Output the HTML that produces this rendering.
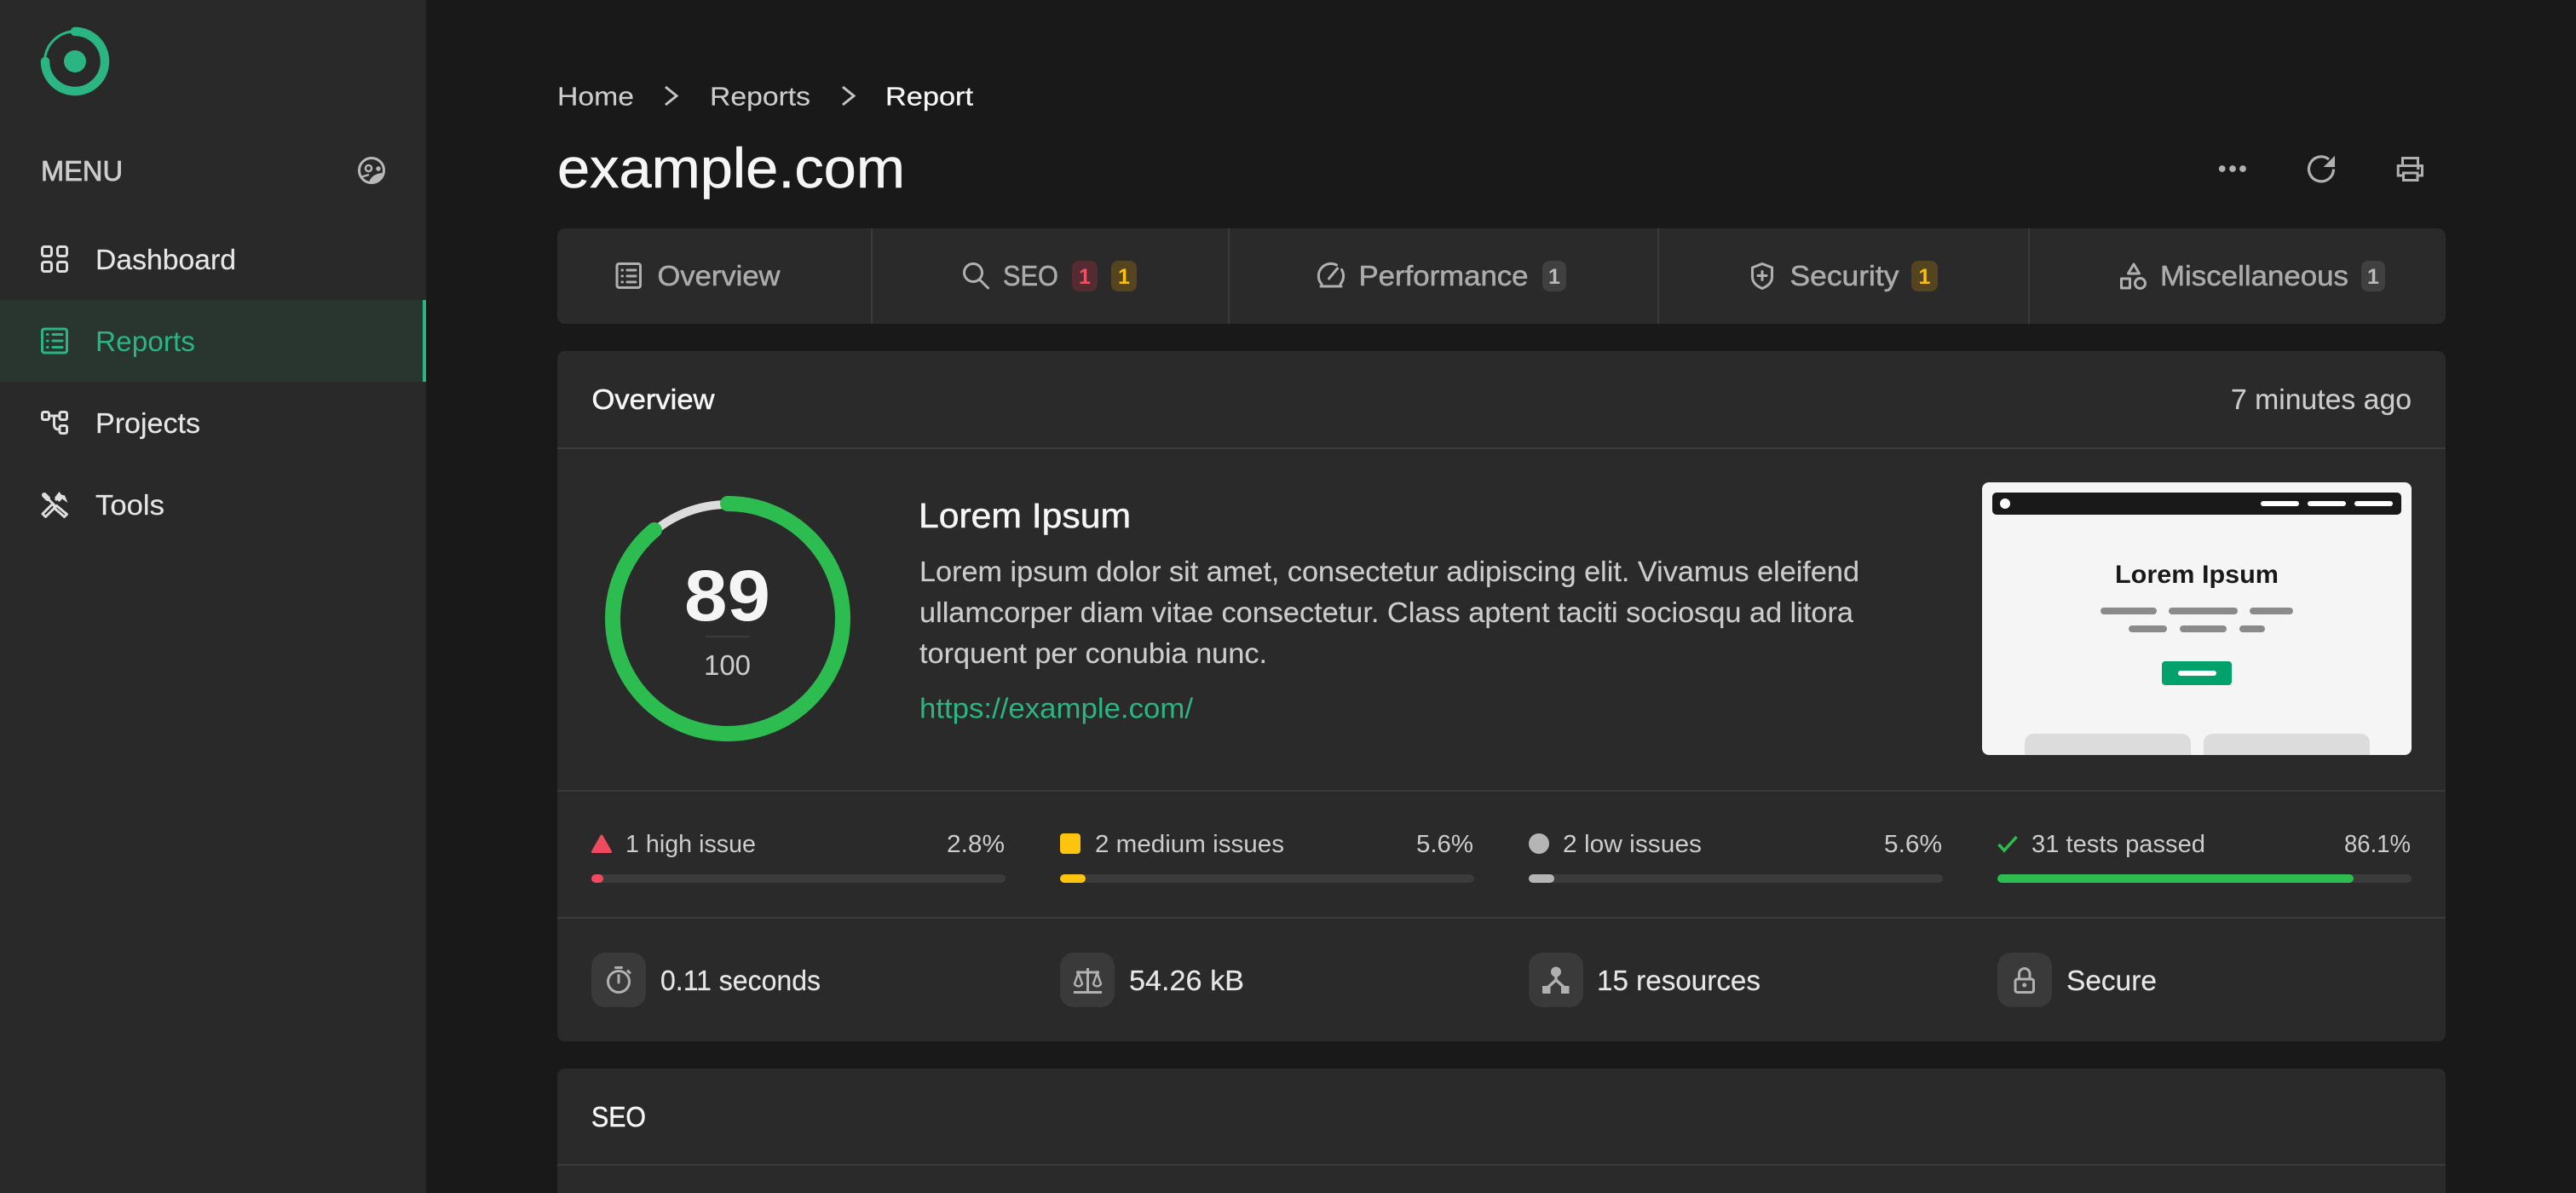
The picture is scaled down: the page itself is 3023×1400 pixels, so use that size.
<!DOCTYPE html>
<html lang="en">
<head>
<meta charset="utf-8">
<title>example.com - Report</title>
<style>
html,body{margin:0;padding:0;background:#191919;width:3023px;height:1400px;overflow:hidden}
svg{display:block}
text{font-family:"Liberation Sans",Arial,sans-serif;font-size:33px;white-space:pre}
.m{stroke-width:.55px;paint-order:stroke}
.ic{fill:none;stroke-width:3;stroke-linecap:round;stroke-linejoin:round}
.g1{fill:#e6e6e6;stroke:#e6e6e6}
.g2{fill:#cccccc;stroke:#cccccc}
.g3{fill:#ababab;stroke:#ababab}
.w{fill:#f5f5f5;stroke:#f5f5f5}
.s{font-size:29px;fill:#cccccc}
.i2{stroke:#b0b0b0}
.i1{stroke:#dedede}
</style>
</head>
<body>
<svg xmlns="http://www.w3.org/2000/svg" width="3023" height="1400" viewBox="0 0 3023 1400">
<rect width="3023" height="1400" fill="#191919"/>

<!-- Sidebar -->
<rect width="500" height="1400" fill="#292929"/>
<g fill="none" stroke="#2bb583" stroke-linecap="round">
  <path d="M88 37A35 35 0 1 1 53 72" stroke-width="10.5"/>
  <path d="M53 66A36 36 0 0 1 84 37" stroke-width="3"/>
</g>
<circle cx="88" cy="72" r="13" fill="#2bb583"/>

<text x="48" y="212" class="g2" stroke-width=".8" paint-order="stroke" textLength="96" lengthAdjust="spacingAndGlyphs">MENU</text>
<circle cx="436" cy="200" r="14.5" fill="none" stroke="#b8b8b8" stroke-width="3"/>
<circle cx="432.5" cy="197.5" r="3.6" fill="none" stroke="#b8b8b8" stroke-width="2.4"/>
<circle cx="444" cy="198" r="2.7" fill="#b8b8b8"/>
<path d="M433 214C435 207 441 203 451 203C450 209 445 214 438 215Z" fill="#b8b8b8"/>
<path d="M423 208L433 205" fill="none" stroke="#b8b8b8" stroke-width="2.4"/>

<g class="ic i1">
  <rect x="49.5" y="289.5" width="11" height="11" rx="2.5"/>
  <rect x="67.5" y="289.5" width="11" height="11" rx="2.5"/>
  <rect x="49.5" y="307.5" width="11" height="11" rx="2.5"/>
  <rect x="67.5" y="307.5" width="11" height="11" rx="2.5"/>
</g>
<text x="112" y="316" class="g1" stroke-width=".2" textLength="165" lengthAdjust="spacingAndGlyphs">Dashboard</text>

<rect y="352" width="500" height="96" fill="#29352f"/>
<rect x="496" y="352" width="4" height="96" fill="#2bb583"/>
<g class="ic" stroke="#2bb583">
  <rect x="49.5" y="386" width="29" height="28" rx="2.5"/>
  <path d="M62 392.5H73M62 400H73M62 407.5H73"/>
  <path d="M55.5 392.5H56M55.5 400H56M55.5 407.5H56"/>
</g>
<text x="112" y="412" fill="#2bb583" textLength="117" lengthAdjust="spacingAndGlyphs">Reports</text>

<g class="ic i1">
  <rect x="49.5" y="483.5" width="8" height="9" rx="2"/>
  <rect x="70" y="483.5" width="8.5" height="9" rx="2"/>
  <rect x="70" y="499.5" width="8.5" height="9" rx="2"/>
  <path d="M57.5 488H70M63.5 488V498Q63.5 504 69 504H70"/>
</g>
<text x="112" y="508" class="g1" stroke-width=".2" textLength="123" lengthAdjust="spacingAndGlyphs">Projects</text>

<g fill="none" stroke="#dedede" stroke-linejoin="round">
  <path d="M52 581L56 585" stroke-width="6" stroke-linecap="round"/>
  <path d="M56 585L66 595" stroke-width="3"/>
  <path d="M66.5 593.5L78.5 603.5L75.5 606.5L63.5 596Z" stroke-width="3"/>
  <path d="M50 603L61.5 591.5L65 595L53.5 606.5Z" stroke-width="3"/>
  <path d="M65 587L70 582" stroke-width="3"/>
</g>
<path d="M64 584L69.5 577L72 580.5L76 581.5L79.5 590L73 585.5L69.5 589Z" fill="#dedede"/>
<text x="112" y="604" class="g1" stroke-width=".2" textLength="81" lengthAdjust="spacingAndGlyphs">Tools</text>

<!-- Breadcrumb & title -->
<text x="654" y="123.5" class="g2" stroke-width=".15" style="font-size:31px" textLength="90" lengthAdjust="spacingAndGlyphs">Home</text>
<path d="M781 102L794 112.500L781 123" fill="none" stroke="#c4c4c4" stroke-width="3"/>
<text x="833" y="123.5" class="g2" stroke-width=".15" style="font-size:31px" textLength="118" lengthAdjust="spacingAndGlyphs">Reports</text>
<path d="M989 102L1002 112.500L989 123" fill="none" stroke="#c4c4c4" stroke-width="3"/>
<text x="1039" y="123.5" class="w" stroke-width=".3" style="font-size:31px" textLength="103" lengthAdjust="spacingAndGlyphs">Report</text>
<text x="654" y="220" class="m w" style="font-size:66px" textLength="408" lengthAdjust="spacingAndGlyphs">example.com</text>

<!-- Header actions -->
<g fill="#b0b0b0"><circle cx="2607.700" cy="198" r="3.900"/><circle cx="2620" cy="198" r="3.900"/><circle cx="2632" cy="198" r="3.900"/></g>
<path d="M2733 187A14.500 14.500 0 1 0 2738.500 198.500" fill="none" stroke="#b0b0b0" stroke-width="3.200"/>
<path d="M2740 182.700V196H2726.700Z" fill="#b0b0b0"/>
<g fill="none" stroke="#b0b0b0" stroke-width="3">
  <path d="M2819.500 193V185.500H2837.500V193"/>
  <path d="M2819 206H2814.200V194.500H2842.500V206H2838"/>
  <rect x="2820.500" y="203" width="16.500" height="8.500"/>
</g>
<circle cx="2837.700" cy="197.500" r="1.800" fill="#b0b0b0"/>

<!-- Tabs -->
<rect x="654" y="268" width="2216" height="112" rx="9" fill="#2a2a2a"/>
<g fill="#3a3a3a"><rect x="1022" y="268" width="2" height="112"/><rect x="1441" y="268" width="2" height="112"/><rect x="1945" y="268" width="2" height="112"/><rect x="2380" y="268" width="2" height="112"/></g>

<g class="ic i2">
  <rect x="724" y="309.500" width="27.500" height="28" rx="2.500"/>
  <path d="M736 317H746M736 324H746M736 331H746M730 317H730.500M730 324H730.500M730 331H730.500"/>
</g>
<text x="771.500" y="335" class="m g3" textLength="144" lengthAdjust="spacingAndGlyphs">Overview</text>

<g class="ic i2"><circle cx="1142" cy="320" r="10.500"/><path d="M1150 328.500L1159.500 338"/></g>
<text x="1177" y="335" class="m g3" textLength="65" lengthAdjust="spacingAndGlyphs">SEO</text>
<rect x="1258" y="306" width="30" height="36" rx="8" fill="#532b30"/>
<text x="1273" y="333" text-anchor="middle" fill="#ef5062" font-weight="700" style="font-size:25px">1</text>
<rect x="1304" y="306" width="30" height="36" rx="8" fill="#54441f"/>
<text x="1319" y="333" text-anchor="middle" fill="#fcc012" font-weight="700" style="font-size:25px">1</text>

<g class="ic i2">
  <path d="M1551 333.500A14.500 14.500 0 0 1 1568.500 311M1574.500 316.500A14.500 14.500 0 0 1 1573 333.500M1550 336H1574"/>
  <path d="M1559.500 327L1569.500 315"/>
</g>
<text x="1594.500" y="335" class="m g3" textLength="199" lengthAdjust="spacingAndGlyphs">Performance</text>
<rect x="1810" y="306" width="28" height="36" rx="8" fill="#404040"/>
<text x="1824" y="333" text-anchor="middle" fill="#bbbbbb" font-weight="700" style="font-size:25px">1</text>

<g class="ic i2">
  <path d="M2068 309.500L2079.500 314V325C2079.500 332 2074 336 2068 338.500C2062 336 2056.500 332 2056.500 325V314Z"/>
  <path d="M2068 318.500V328.500M2063 323.500H2073"/>
</g>
<text x="2100.500" y="335" class="m g3" textLength="128" lengthAdjust="spacingAndGlyphs">Security</text>
<rect x="2243" y="306" width="31" height="36" rx="8" fill="#54441f"/>
<text x="2258.500" y="333" text-anchor="middle" fill="#fcc012" font-weight="700" style="font-size:25px">1</text>

<g class="ic i2">
  <path d="M2504 310L2510.500 321H2497.500Z"/>
  <rect x="2489.500" y="327" width="10" height="11"/>
  <circle cx="2511.500" cy="332.500" r="6"/>
</g>
<text x="2535" y="335" class="m g3" textLength="221" lengthAdjust="spacingAndGlyphs">Miscellaneous</text>
<rect x="2771" y="306" width="28" height="36" rx="8" fill="#404040"/>
<text x="2785" y="333" text-anchor="middle" fill="#bbbbbb" font-weight="700" style="font-size:25px">1</text>

<!-- Overview card -->
<rect x="654" y="412" width="2216" height="810" rx="9" fill="#2a2a2a"/>
<text x="694.500" y="480" class="m w" textLength="144" lengthAdjust="spacingAndGlyphs">Overview</text>
<text x="2618" y="480" class="g2" stroke-width=".15" textLength="212" lengthAdjust="spacingAndGlyphs">7 minutes ago</text>
<rect x="654" y="525" width="2216" height="2" fill="#3a3a3a"/>

<circle cx="854" cy="726" r="134" fill="none" stroke="#dcdcdc" stroke-width="10"/>
<circle cx="854" cy="726" r="135" fill="none" stroke="#2dbc50" stroke-width="18" stroke-linecap="round" pathLength="100" stroke-dasharray="89 100" transform="rotate(-90 854 726)"/>
<text x="803" y="728" fill="#f5f5f5" font-weight="700" style="font-size:84px" textLength="101" lengthAdjust="spacingAndGlyphs">89</text>
<rect x="828" y="746" width="52" height="2" fill="#3a3a3a"/>
<text x="826" y="792" fill="#cccccc" textLength="55" lengthAdjust="spacingAndGlyphs">100</text>

<text x="1078" y="619" class="m w" style="font-size:41px" textLength="249" lengthAdjust="spacingAndGlyphs">Lorem Ipsum</text>
<text x="1079" y="682" class="g2" stroke-width=".15" textLength="1103" lengthAdjust="spacingAndGlyphs">Lorem ipsum dolor sit amet, consectetur adipiscing elit. Vivamus eleifend</text>
<text x="1079" y="730" class="g2" stroke-width=".15" textLength="1096" lengthAdjust="spacingAndGlyphs">ullamcorper diam vitae consectetur. Class aptent taciti sociosqu ad litora</text>
<text x="1079" y="778" class="g2" stroke-width=".15" textLength="408" lengthAdjust="spacingAndGlyphs">torquent per conubia nunc.</text>
<text x="1079" y="842.500" fill="#2bb583" textLength="321" lengthAdjust="spacingAndGlyphs">https://example.com/</text>

<!-- Preview thumbnail -->
<rect x="2326" y="566" width="504" height="320" rx="8" fill="#f5f5f5"/>
<rect x="2338" y="578" width="480" height="26" rx="5" fill="#191919"/>
<circle cx="2353" cy="591" r="6" fill="#fff"/>
<g fill="#fff"><rect x="2653" y="588" width="45" height="6" rx="3"/><rect x="2708" y="588" width="45" height="6" rx="3"/><rect x="2763" y="588" width="45" height="6" rx="3"/></g>
<text x="2482" y="684" fill="#191919" font-weight="700" style="font-size:30px" textLength="192" lengthAdjust="spacingAndGlyphs">Lorem Ipsum</text>
<g fill="#8a8a8a">
  <rect x="2465" y="713" width="66" height="8" rx="4"/><rect x="2545" y="713" width="81" height="8" rx="4"/><rect x="2640" y="713" width="51" height="8" rx="4"/>
  <rect x="2498" y="734" width="45" height="8" rx="4"/><rect x="2558" y="734" width="55" height="8" rx="4"/><rect x="2628" y="734" width="30" height="8" rx="4"/>
</g>
<rect x="2537" y="776" width="82" height="28" rx="4" fill="#00a16b"/>
<rect x="2556" y="787" width="45" height="6" rx="3" fill="#fff"/>
<path d="M2376 886V873Q2376 861 2388 861H2559Q2571 861 2571 873V886Z" fill="#dcdcdc"/>
<path d="M2586 886V873Q2586 861 2598 861H2769Q2781 861 2781 873V886Z" fill="#dcdcdc"/>

<rect x="654" y="927" width="2216" height="2" fill="#3a3a3a"/>

<!-- Issue stats -->
<path d="M706 981L716.500 999.500H695.500Z" fill="#f04a5e" stroke="#f04a5e" stroke-width="3" stroke-linejoin="round"/>
<text x="734" y="1000" class="s" textLength="153" lengthAdjust="spacingAndGlyphs">1 high issue</text>
<text x="1111" y="1000" class="s" textLength="68" lengthAdjust="spacingAndGlyphs">2.8%</text>
<rect x="694" y="1026" width="486" height="10" rx="5" fill="#3b3b3b"/>
<rect x="694" y="1026" width="14" height="10" rx="5" fill="#f04a5e"/>

<rect x="1244" y="978" width="24" height="24" rx="4" fill="#fdc40f"/>
<text x="1285" y="1000" class="s" textLength="222" lengthAdjust="spacingAndGlyphs">2 medium issues</text>
<text x="1662" y="1000" class="s" textLength="67" lengthAdjust="spacingAndGlyphs">5.6%</text>
<rect x="1244" y="1026" width="486" height="10" rx="5" fill="#3b3b3b"/>
<rect x="1244" y="1026" width="30" height="10" rx="5" fill="#fdc40f"/>

<circle cx="1806" cy="990" r="12" fill="#b5b5b5"/>
<text x="1834" y="1000" class="s" textLength="163" lengthAdjust="spacingAndGlyphs">2 low issues</text>
<text x="2211" y="1000" class="s" textLength="68" lengthAdjust="spacingAndGlyphs">5.6%</text>
<rect x="1794" y="1026" width="486" height="10" rx="5" fill="#3b3b3b"/>
<rect x="1794" y="1026" width="30" height="10" rx="5" fill="#b5b5b5"/>

<path d="M2345.500 991L2352 998L2366.500 982" fill="none" stroke="#2dbc50" stroke-width="3.500"/>
<text x="2384" y="1000" class="s" textLength="204" lengthAdjust="spacingAndGlyphs">31 tests passed</text>
<text x="2751" y="1000" class="s" textLength="78" lengthAdjust="spacingAndGlyphs">86.1%</text>
<rect x="2344" y="1026" width="486" height="10" rx="5" fill="#3b3b3b"/>
<rect x="2344" y="1026" width="418" height="10" rx="5" fill="#2dbc50"/>

<rect x="654" y="1076" width="2216" height="2" fill="#3a3a3a"/>

<!-- Bottom stats -->
<g fill="#3a3a3a">
  <rect x="694" y="1118" width="64" height="64" rx="16"/>
  <rect x="1244" y="1118" width="64" height="64" rx="16"/>
  <rect x="1794" y="1118" width="64" height="64" rx="16"/>
  <rect x="2344" y="1118" width="64" height="64" rx="16"/>
</g>
<g class="ic i2">
  <circle cx="726" cy="1152" r="12.500"/>
  <path d="M722.500 1135.500H729.500M726 1144.500V1153M737 1139.500L739 1141.500"/>
</g>
<text x="775" y="1162" class="g1" stroke-width=".2" textLength="188" lengthAdjust="spacingAndGlyphs">0.11 seconds</text>

<g fill="none" stroke="#b0b0b0" stroke-width="3">
  <path d="M1260 1164.500H1293M1276.500 1136V1164M1263 1141H1290"/>
  <path d="M1265.500 1142L1261 1154.500A5 5 0 0 0 1270 1154.500ZM1287.500 1142L1283 1154.500A5 5 0 0 0 1292 1154.500Z" stroke-width="2.500"/>
</g>
<text x="1325" y="1162" class="g1" stroke-width=".2" textLength="135" lengthAdjust="spacingAndGlyphs">54.26 kB</text>

<circle cx="1826" cy="1140.500" r="6" fill="#b0b0b0"/>
<path d="M1826 1145V1150L1815 1160M1826 1150L1837 1160" fill="none" stroke="#b0b0b0" stroke-width="3.500"/>
<rect x="1810" y="1157" width="9.500" height="9" fill="#b0b0b0"/>
<rect x="1832" y="1157" width="9.500" height="9" fill="#b0b0b0"/>
<text x="1874" y="1162" class="g1" stroke-width=".2" textLength="192" lengthAdjust="spacingAndGlyphs">15 resources</text>

<g class="ic i2">
  <rect x="2365" y="1149" width="21.500" height="15.500" rx="2.500"/>
  <path d="M2369.500 1149V1142A6.300 6.300 0 0 1 2382 1142V1149"/>
</g>
<circle cx="2375.700" cy="1156" r="2.500" fill="#b0b0b0"/>
<text x="2425" y="1162" class="g1" stroke-width=".2" textLength="106" lengthAdjust="spacingAndGlyphs">Secure</text>

<!-- SEO card -->
<rect x="654" y="1254" width="2216" height="160" rx="9" fill="#2a2a2a"/>
<text x="694" y="1322" class="m w" textLength="64" lengthAdjust="spacingAndGlyphs">SEO</text>
<rect x="654" y="1366" width="2216" height="2" fill="#3a3a3a"/>
</svg>
</body>
</html>
